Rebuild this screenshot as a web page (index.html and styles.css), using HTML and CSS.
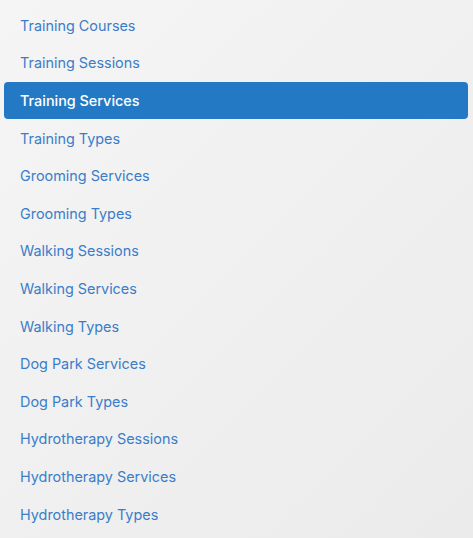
FILE: index.html
```html
<!DOCTYPE html>
<html lang="en">
<head>
<meta charset="utf-8">
<title>Services</title>
<link rel="stylesheet" href="styles.css">
</head>
<body>
<nav class="menu">
  <a class="item" href="#">Training Courses</a>
  <a class="item" href="#">Training Sessions</a>
  <a class="item active" href="#">Training Services</a>
  <a class="item" href="#">Training Types</a>
  <a class="item" href="#">Grooming Services</a>
  <a class="item" href="#">Grooming Types</a>
  <a class="item" href="#">Walking Sessions</a>
  <a class="item" href="#">Walking Services</a>
  <a class="item" href="#">Walking Types</a>
  <a class="item" href="#">Dog Park Services</a>
  <a class="item" href="#">Dog Park Types</a>
  <a class="item" href="#">Hydrotherapy Sessions</a>
  <a class="item" href="#">Hydrotherapy Services</a>
  <a class="item" href="#">Hydrotherapy Types</a>
</nav>
</body>
</html>
```
FILE: styles.css
```css
html, body {
  margin: 0;
  padding: 0;
  height: 100%;
}
body {
  background: linear-gradient(135deg, #f5f5f5 0%, #ebebeb 100%);
  font-family: Inter, "Noto Sans", sans-serif;
  font-size: 14.4px;
  overflow: hidden;
}
.menu {
  display: flex;
  flex-direction: column;
  padding: 6.6px 5px 0 4px;
}
.item {
  display: block;
  padding: 8.3px 16px;
  line-height: 21px;
  color: #3b7dc9;
  text-decoration: none;
  border-radius: 4px;
}
.item.active {
  background: #2479c4;
  color: #ffffff;
  font-weight: 500;
}
```
